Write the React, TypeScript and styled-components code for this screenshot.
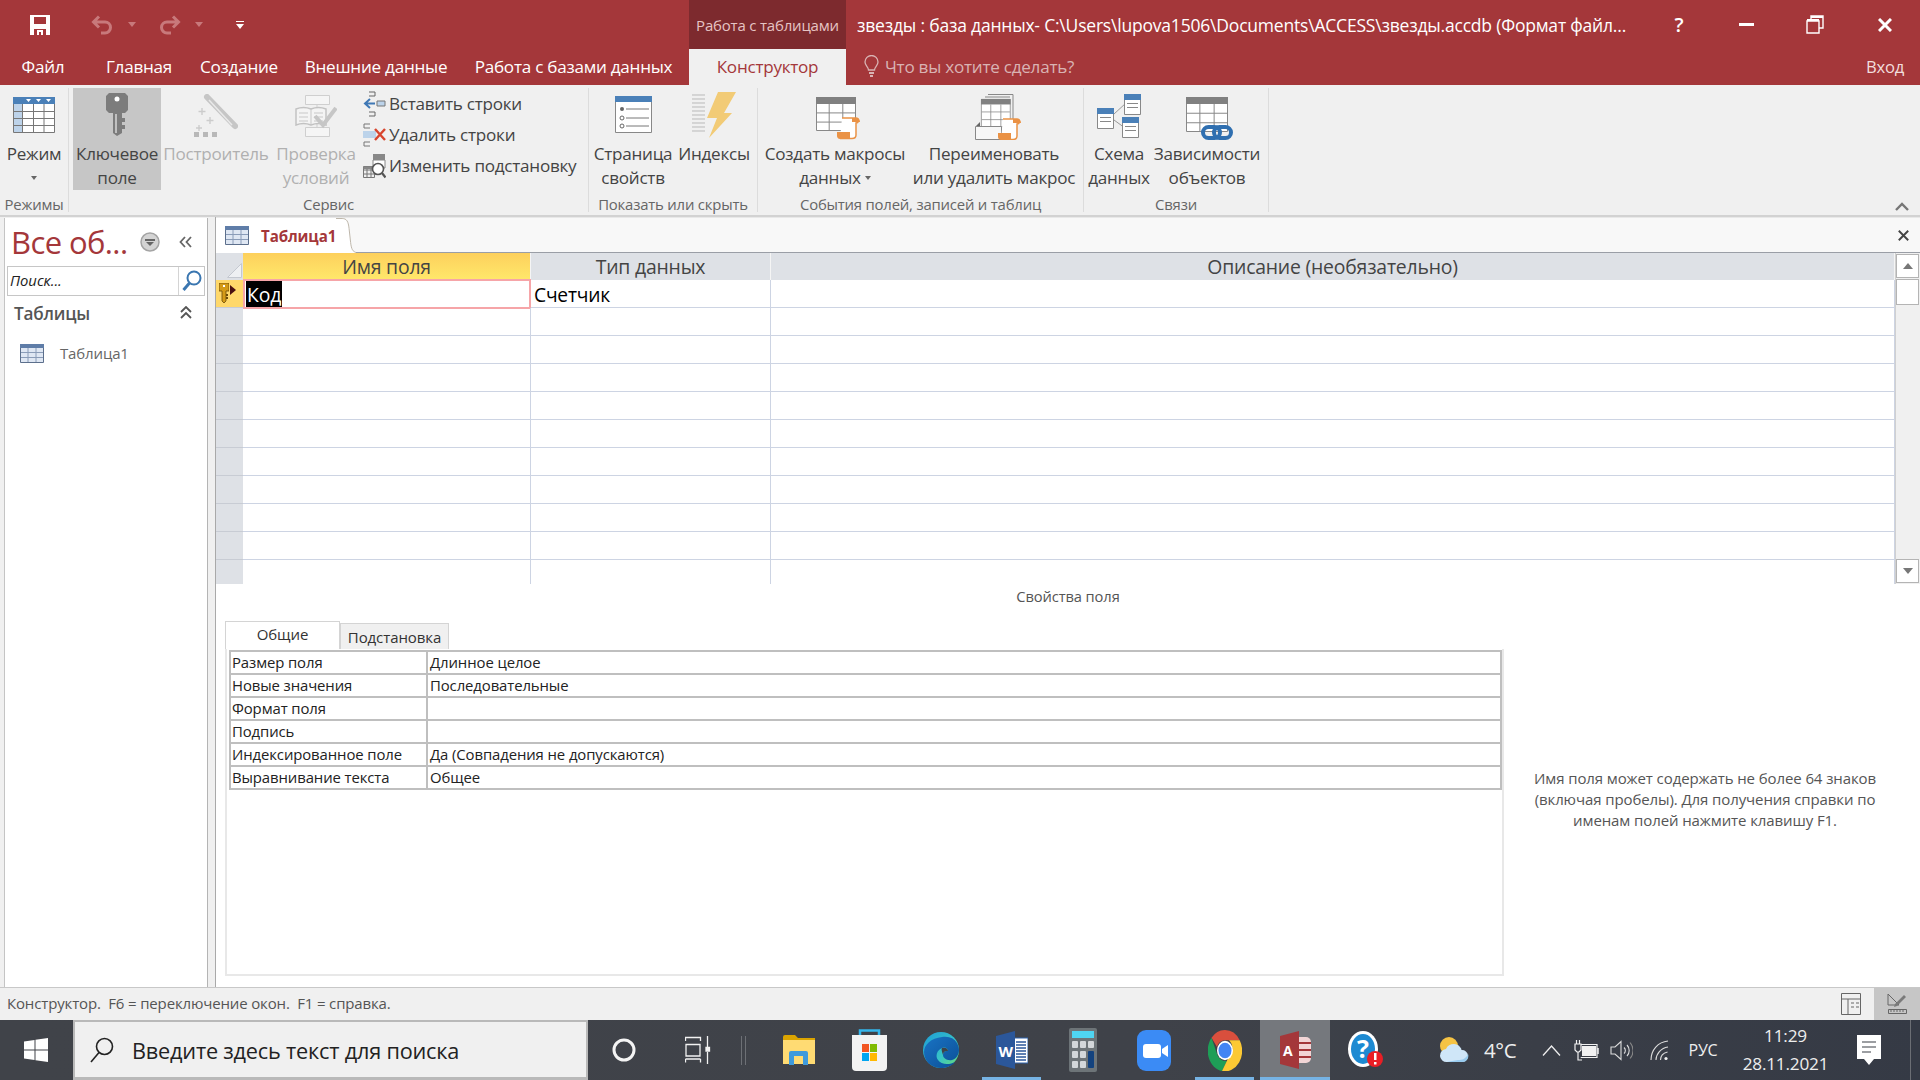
import React from "react";
import styled, { createGlobalStyle } from "styled-components";

const UI = `"Open Sans", "Noto Sans", "Liberation Sans", sans-serif`;
const RED = "#a4373a";

const Global = createGlobalStyle`
  html, body { margin: 0; padding: 0; background: #f0f0f0; }
  * { box-sizing: border-box; }
`;

const Page = styled.div`
  width: 1920px; height: 1080px; overflow: hidden; display: flex; flex-direction: column;
  font-family: ${UI}; background: #f0f0f0; color: #444;
`;
const Ico = styled.svg`display: block; flex: none;`;

/* title bar */
const TitleBar = styled.div`height: 49px; background: ${RED}; display: flex; align-items: center; color: #fff;`;
const Slot = styled.div<{ $w: number; $ml?: number }>`
  width: ${p => p.$w}px; margin-left: ${p => p.$ml ?? 0}px; height: 100%; flex: none;
  display: flex; align-items: center; justify-content: center;
`;
const HelpMark = styled.span`font-size: 20px; font-weight: 600; color: #fff;`;
const ContextLabel = styled.div`
  width: 157px; height: 49px; margin-left: 439px; background: #7d2a2e; color: #e6c4c4;
  font-size: 15px; letter-spacing: -0.2px; display: flex; align-items: center; justify-content: center; white-space: nowrap;
`;
const DocTitle = styled.div`
  margin-left: 11px; width: 790px; font-size: 17.5px; letter-spacing: -0.2px; white-space: nowrap; overflow: hidden; color: #fff;
`;
const TabBar = styled.div`height: 36px; background: ${RED}; display: flex; align-items: stretch;`;
const Tab = styled.div<{ $w: number }>`
  width: ${p => p.$w}px; flex: none; display: flex; align-items: center; justify-content: center;
  color: #fff; font-size: 17.1px; letter-spacing: -0.25px; white-space: nowrap; padding-bottom: 2px;
`;
const ActiveTab = styled(Tab)`margin-left: 8px; background: #f0f0f0; color: ${RED};`;
const TellMe = styled.div`
  margin-left: 18px; display: flex; align-items: center; gap: 6px; color: #d9b3b3;
  font-size: 17.1px; letter-spacing: -0.25px; padding-bottom: 2px;
`;
const SignIn = styled.div`
  margin-left: auto; padding: 0 16px 2px 0; display: flex; align-items: center; color: #f2dede; font-size: 16.6px; letter-spacing: -0.25px;
`;

/* ribbon */
const Ribbon = styled.div`
  height: 132px; background: #f0f0f0; display: flex; padding-top: 3px; border-bottom: 2px solid #d2d2d2; position: relative;
`;
const Group = styled.div<{ $w: number; $pl: number }>`
  width: ${p => p.$w}px; flex: none; height: 124px; border-right: 1px solid #dcdcdc;
  display: flex; flex-direction: column; padding-left: ${p => p.$pl}px;
`;
const GroupBody = styled.div`display: flex; height: 102px;`;
const GroupLabel = styled.div<{ $pl: number }>`
  margin: 5px 0 0 -${p => p.$pl}px; height: 18px; line-height: 18px; text-align: center; font-size: 14.9px; letter-spacing: -0.2px; color: #666; white-space: nowrap;
`;
const Big = styled.div<{ $w: number; $on?: boolean; $off?: boolean; $ml?: number }>`
  width: ${p => p.$w}px; height: 102px; flex: none; margin-left: ${p => p.$ml ?? 0}px;
  background: ${p => (p.$on ? "#c6c6c6" : "transparent")};
  color: ${p => (p.$off ? "#b0b0b0" : "#444")};
  display: flex; flex-direction: column; align-items: center;
  font-size: 17.1px; letter-spacing: -0.25px; line-height: 24px; text-align: center; white-space: nowrap;
`;
const BigIcon = styled.div<{ $top: number; $shift?: number }>`
  height: 54px; width: 100%; padding-top: ${p => p.$top}px; padding-left: ${p => p.$shift ?? 0}px; display: flex; justify-content: center; flex: none;
`;
const Caret = styled.span<{ $flush?: boolean }>`
  display: inline-block; width: 0; height: 0; border-left: 3.5px solid transparent; border-right: 3.5px solid transparent;
  border-top: 4px solid #666; vertical-align: middle; margin-left: ${p => (p.$flush ? 0 : 4)}px;
`;
const CaretLine = styled.div`height: 24px; display: flex; align-items: center; justify-content: center;`;
const SmallCol = styled.div`display: flex; flex-direction: column; margin-left: 4px;`;
const SmallRow = styled.div`
  height: 31px; display: flex; align-items: center; gap: 3px; font-size: 17.1px; letter-spacing: -0.25px; white-space: nowrap; color: #444;
`;
const Collapse = styled.div`position: absolute; right: 11px; bottom: 4px;`;

/* workspace */
const Work = styled.div`flex: 1; min-height: 0; display: flex; background: #f0f0f0; border-bottom: 1px solid #c8c8c8;`;
const Nav = styled.aside`
  width: 204px; margin: 1px 0 0 4px; background: #fff; border-left: 1px solid #c4c4c4; border-right: 1px solid #b4b4b4; flex: none;
  display: flex; flex-direction: column;
`;
const NavHead = styled.div`height: 48px; display: flex; align-items: center; padding-left: 6px; position: relative;`;
const NavTitle = styled.div`
  color: ${RED}; font-size: 31px; letter-spacing: -0.6px; width: 129px; white-space: nowrap; line-height: 48px;
`;
const NavSearch = styled.div`
  margin-left: 2px; width: 198px; height: 30px; border: 1px solid #c6c6c6; display: flex; align-items: center; flex: none;
`;
const SearchText = styled.div`
  flex: 1; font-style: italic; color: #222; font-size: 14.8px; padding-left: 2px; height: 100%; line-height: 26px; border-right: 1px solid #d4d4d4;
`;
const SearchBtn = styled.div`width: 25px; display: flex; justify-content: center;`;
const NavGroup = styled.div`
  height: 34px; display: flex; align-items: center; justify-content: space-between; padding: 0 15px 0 9px;
  font-size: 17.2px; font-weight: 600; color: #555; letter-spacing: -0.2px;
`;
const NavItem = styled.div`
  margin-top: 8px; height: 30px; display: flex; align-items: center; gap: 16px; padding-left: 15px; font-size: 15px; color: #666; letter-spacing: -0.15px;
`;
const Doc = styled.main`
  flex: 1; min-width: 0; margin-left: 7px; background: #fff; border-left: 1px solid #a9a9a9; display: flex; flex-direction: column;
`;
const Strip = styled.div`
  height: 36px; background: #f8f8f8; display: flex; align-items: stretch; border-bottom: 1px solid #9a9ea6; border-top: 1px solid #e8e8e8;
  justify-content: space-between; padding-right: 11px; flex: none;
`;
const DocTab = styled.div`
  width: 121px; margin-bottom: -1px; background: #fff; position: relative; display: flex; align-items: center; gap: 12px; padding-left: 9px;
  font-size: 15.1px; font-weight: 700; color: ${RED}; letter-spacing: -0.1px; white-space: nowrap;
`;
const TabEdge = styled.svg`position: absolute; right: -19px; top: 0;`;
const CloseDoc = styled.div`display: flex; align-items: center;`;
const GridWrap = styled.div`height: 331px; display: flex; overflow: hidden; flex: none;`;
const DesignGrid = styled.div`
  flex: 1; min-width: 0; display: grid; grid-template-columns: 27px 288px 240px 1fr; grid-auto-rows: 28px; grid-template-rows: 27px;
  align-content: start;
`;
const HeadCell = styled.div<{ $active?: boolean }>`
  background: ${p => (p.$active ? "linear-gradient(#fdd05c, #ffe86b)" : "#dee1e6")};
  border-right: 1px solid #f5f5f5; display: flex; align-items: center; justify-content: center;
  font-size: 19.4px; letter-spacing: -0.2px; color: #444; white-space: nowrap;
`;
const Corner = styled.div`background: #dee1e6; position: relative; display: flex; justify-content: flex-end; align-items: flex-end; padding: 0 1px 2px 0;`;
const Selector = styled.div<{ $active?: boolean }>`
  background: ${p => (p.$active ? "#ffd86a" : "#dee1e6")}; border-bottom: 1px solid #c8ccd4; display: flex; align-items: flex-start; padding: 3px 0 0 3px; gap: 1px;
`;
const Cell = styled.div`
  border-right: 1px solid #cdd4e3; border-bottom: 1px solid #cdd4e3; font-size: 19.2px; letter-spacing: -0.2px; color: #000; padding-left: 3px; line-height: 30px; white-space: nowrap;
`;
const CurrentCell = styled.div`
  border: 2px solid #f6a5a8; margin: -1px 0 -1px 0; padding-left: 1px; display: flex; align-items: stretch; font-size: 19.4px; color: #fff;
`;
const Selected = styled.span`background: #000; color: #fff; padding: 0 1px; line-height: 27px; letter-spacing: -0.1px;`;
const Scroll = styled.div`width: 25px; flex: none; background: #f0f0f0; display: flex; flex-direction: column; border-left: 1px solid #d0d0d0; padding: 1px 0;`;
const ScrollBtn = styled.div`height: 24px; background: #fff; border: 1px solid #b4b4b4; display: flex; align-items: center; justify-content: center; margin-right: 1px;`;
const Thumb = styled.div`height: 26px; background: #fff; border: 1px solid #b4b4b4; margin: 1px 1px 0 0;`;
const ScrollGap = styled.div`flex: 1;`;
const Triangle = styled.span<{ $down?: boolean }>`
  width: 0; height: 0; border-left: 5.5px solid transparent; border-right: 5.5px solid transparent;
  ${p => (p.$down ? "border-top: 6px solid #777;" : "border-bottom: 6px solid #777;")}
`;
const Caption = styled.div`margin-top: 2px; height: 20px; line-height: 20px; text-align: center; font-size: 14.7px; letter-spacing: -0.1px; color: #555; flex: none;`;
const PropsArea = styled.div`flex: 1; min-height: 0; margin-top: 15px; padding-left: 9px; display: flex;`;
const PropsLeft = styled.div`width: 1279px; flex: none; display: flex; flex-direction: column;`;
const PropTabs = styled.div`height: 28px; display: flex; align-items: flex-end; flex: none;`;
const PropTab = styled.div<{ $active?: boolean; $w: number }>`
  width: ${p => p.$w}px; height: ${p => (p.$active ? 28 : 26)}px; background: ${p => (p.$active ? "#fff" : "#f0f0f0")};
  border: 1px solid #d4d4d4; border-bottom: none; display: flex; align-items: center; justify-content: center; font-size: 15px; letter-spacing: -0.1px; color: #333;
  ${p => (p.$active ? "padding-bottom: 3px;" : "")}
`;
const PropFrame = styled.div`height: 327px; border: 2px solid #e8e8e8; border-top: none; padding: 1px 0 0 2px; flex: none;`;
const PropTable = styled.div`width: 1273px; border: 2px solid #bfbfbf; border-bottom: none;`;
const PropRow = styled.div`height: 23px; display: grid; grid-template-columns: 197px 1fr; border-bottom: 2px solid #bfbfbf; font-size: 14.9px; letter-spacing: -0.1px; line-height: 21px; color: #222; white-space: nowrap;`;
const PropKey = styled.div`border-right: 2px solid #bfbfbf; padding-left: 1px;`;
const PropVal = styled.div`padding-left: 2px;`;
const Help = styled.div`
  flex: 1; padding: 147px 14px 0 0; text-align: center; font-size: 15px; line-height: 21px; color: #555; letter-spacing: -0.1px; white-space: nowrap;
`;

/* status */
const Status = styled.div`height: 32px; display: flex; align-items: center; background: #f0f0f0; padding-left: 7px; font-size: 15px; color: #555; letter-spacing: -0.15px; white-space: pre; flex: none;`;
const StatusText = styled.div`padding-bottom: 2px;`;
const StatusViews = styled.div`margin-left: auto; display: flex; height: 100%;`;
const ViewBtn = styled.div<{ $on?: boolean; $w: number }>`
  width: ${p => p.$w}px; display: flex; align-items: center; justify-content: center; background: ${p => (p.$on ? "#c6c6c6" : "transparent")};
`;

/* taskbar */
const Taskbar = styled.div`
  height: 60px; background: linear-gradient(90deg, #404349, #3f4249 60%, #353a45); display: flex; align-items: stretch; color: #eee; flex: none;
`;
const StartBtn = styled.div`width: 73px; display: flex; align-items: center; justify-content: center; padding-right: 1px;`;
const SearchBox = styled.div`
  width: 515px; background: #f0f0f0; border: 2px solid #b9b9b9; border-bottom-width: 3px; display: flex; align-items: center; gap: 18px; padding: 1px 0 0 15px;
  font-size: 21.7px; color: #222; letter-spacing: -0.2px; white-space: nowrap; flex: none;
`;
const TaskSlot = styled.div<{ $w: number; $open?: boolean; $active?: boolean; $pl?: number }>`
  width: ${p => p.$w}px; flex: none; position: relative; display: flex; align-items: center; justify-content: center;
  padding-left: ${p => p.$pl ?? 0}px;
  background: ${p => (p.$active ? "#75787d" : "transparent")};
  ${p => (p.$open || p.$active ? `&::after { content: ""; position: absolute; left: ${p.$active ? 0 : 6}px; right: ${p.$active ? 0 : 6}px; bottom: 0; height: 3px; background: #76b3e4; }` : "")}
`;
const Sep = styled.div`width: 28px; flex: none; display: flex; justify-content: flex-start; align-items: center; gap: 3px; padding-left: 6px;`;
const SepLine = styled.div`width: 1px; height: 29px; background: #6d7075;`;
const TrayText = styled.div<{ $w: number }>`
  width: ${p => p.$w}px; flex: none; display: flex; align-items: center; justify-content: center; font-size: 19px; letter-spacing: -0.4px; color: #eee;
`;
const TempText = styled(TrayText)`justify-content: flex-start; font-size: 20.5px; letter-spacing: -0.4px; padding-left: 2px;`;
const LangText = styled(TrayText)`font-size: 16px; letter-spacing: -0.2px;`;
const Clock = styled.div`
  width: 115px; flex: none; display: flex; flex-direction: column; justify-content: center; align-items: center; font-size: 17.2px; line-height: 28px; letter-spacing: -0.2px; color: #eee;
`;
const EndSep = styled.div`width: 1px; height: 100%; margin-left: 17px; background: #6b6e74;`;

/* ---- icons ---- */
const Save = () => (
  <Ico width="20" height="20" viewBox="0 0 20 20">
    <path d="M0 0h20v20H0z" fill="#fff" />
    <path d="M4 2h12v7H4z" fill={RED} />
    <path d="M4 14h12v6H4z" fill={RED} />
    <path d="M7 15h6v5h-2v-3H9v3H7z" fill="#fff" />
  </Ico>
);
const Undo = ({ flip }: { flip?: boolean }) => (
  <Ico width="22" height="20" viewBox="0 0 22 20" style={flip ? { transform: "scaleX(-1)" } : undefined}>
    <path d="M3 7h11a5.5 5.5 0 0 1 0 11h-4M8 1.5 2.5 7 8 12.5" fill="none" stroke="#c8797b" strokeWidth="3" />
  </Ico>
);
const TinyDown = ({ c = "#c8797b" }: { c?: string }) => (
  <Ico width="8" height="5" viewBox="0 0 8 5"><path d="M0 0h8L4 5z" fill={c} /></Ico>
);
const Customize = () => (
  <Ico width="8" height="8" viewBox="0 0 8 8"><path d="M0 0h8v1H0zM0 3h8L4 8z" fill="#fff" /></Ico>
);
const Minimize = () => <Ico width="15" height="3" viewBox="0 0 15 3"><path d="M0 0h15v3H0z" fill="#fff" /></Ico>;
const Restore = () => (
  <Ico width="18" height="19" viewBox="0 0 18 19" fill="none" stroke="#fff" strokeWidth="1.4">
    <path d="M5 4V1h12v12h-4" /><path d="M1 6h12v12H1z" /><path d="M1 5h12M5 2h12" strokeWidth="2.2" />
  </Ico>
);
const CloseX = ({ s = 14, c = "#fff", w = 3 }: { s?: number; c?: string; w?: number }) => (
  <Ico width={s} height={s} viewBox="0 0 14 14"><path d="M1 1l12 12M13 1 1 13" stroke={c} strokeWidth={w} fill="none" /></Ico>
);
const Bulb = () => (
  <Ico width="15" height="22" viewBox="0 0 15 22" fill="none" stroke="#d9b3b3" strokeWidth="1.3">
    <path d="M4.5 15c0-3-3.5-4.5-3.5-8a6.5 6.5 0 0 1 13 0c0 3.5-3.5 5-3.5 8z" />
    <path d="M5 18h5M6 21h3" strokeWidth="1.8" />
  </Ico>
);
const ModeIcon = () => (
  <Ico width="42" height="36" viewBox="0 0 42 36">
    <path d="M.5.5h41v35H.5z" fill="#fff" stroke="#777" />
    <path d="M0 0h42v7H0z" fill="#4a80b8" />
    <path d="M13 2h5l-2.500 3zM23 2h5l-2.500 3zM33 2h5l-2.500 3z" fill="#fff" />
    <path d="M1 7h8v28H1z" fill="#bdd3ea" />
    <path d="M9.500 7v28M20.500 7v28M31 7v28M1 14.500h40M1 21.500h40M1 28.500h40" stroke="#777" fill="none" />
  </Ico>
);
const KeyIcon = () => (
  <Ico width="22" height="43" viewBox="0 0 22 43">
    <path d="M3 0h16l3 3v14l-3 3h-3v20l-5 3-4-3V20H3l-3-3V3z" fill="#7c7c7c" />
    <circle cx="11" cy="6" r="2.500" fill="#fff" />
    <path d="M9 21h2v19H9z" fill="#c0c0c0" />
    <path d="M16 25h3v4h-3zM16 32h3v4h-3z" fill="#7c7c7c" />
  </Ico>
);
const BuilderIcon = () => (
  <Ico width="44" height="44" viewBox="0 0 44 44">
    <path d="M13 3 41 32" stroke="#c6c6c6" strokeWidth="6" strokeLinecap="round" />
    <path d="M15 6 38 31" stroke="#e9e9e9" strokeWidth="1.5" />
    <path d="M8 14v7M4.500 17.500h7M16 23v7M12.500 26.500h7M5 31v6M2 34h6" stroke="#ccc" strokeWidth="1.4" />
    <path d="M0 38h5v5H0zM9 38h5v5H9zM18 38h5v5h-5z" fill="#b8b8b8" />
  </Ico>
);
const ValidateIcon = () => (
  <Ico width="42" height="44" viewBox="0 0 42 44" fill="none">
    <path d="M10.500 1.500h24v9h-24zM10.500 33.500h24v9h-24z" stroke="#cfcfcf" fill="#f5f5f5" />
    <path d="M22 11v22" stroke="#cfcfcf" />
    <path d="M1 15c5-2 10-2 15 0 5-2 10-2 15 0v16c-5-2-10-2-15 0-5-2-10-2-15 0z" fill="#f4f4f4" stroke="#c2c2c2" strokeWidth="1.5" />
    <path d="M16 15v16M4 19h9M4 23h9M4 27h9M19 19h9M19 23h9M19 27h9" stroke="#c8c8c8" />
    <path d="M20 22l8 9L41 14" stroke="#c6c6c6" strokeWidth="4" />
  </Ico>
);
const InsertRows = () => (
  <Ico width="23" height="26" viewBox="0 0 23 26" fill="none">
    <path d="M6 1h6v4H6M6 21h6v4H6" stroke="#666" />
    <path d="M14 10h8v5h-8z" fill="#bcd3ea" stroke="#777" />
    <path d="M12 12.500H3M7 8l-5 4.500L7 17" stroke="#3f78b5" strokeWidth="2" />
  </Ico>
);
const DeleteRows = () => (
  <Ico width="23" height="24" viewBox="0 0 23 24" fill="none">
    <path d="M7 1H1v4h6M7 19H1v4h6" stroke="#777" />
    <path d="M0 8h13v7H0z" fill="#bcd3ea" />
    <path d="M12 6l10 11M22 6 12 17" stroke="#d8452e" strokeWidth="2.400" />
  </Ico>
);
const LookupIcon = () => (
  <Ico width="23" height="26" viewBox="0 0 23 26" fill="none">
    <path d="M10 1h12v6H10z" fill="#888" />
    <path d="M10 7h12v8H10z" stroke="#888" fill="#fff" />
    <path d="M.5 13.500h11v11H.5zM4 14v10M8 14v10M1 17h10M1 21h10" stroke="#777" />
    <path d="M.5 13.500h11V16H.5z" fill="#888" />
    <circle cx="15" cy="16" r="5.500" fill="#fff" stroke="#555" strokeWidth="1.600" />
    <path d="M19 20l3.500 4.500" stroke="#555" strokeWidth="2.200" />
  </Ico>
);
const PropSheet = () => (
  <Ico width="37" height="37" viewBox="0 0 37 37" fill="none">
    <path d="M.5.5h36v36H.5z" fill="#fff" stroke="#888" />
    <path d="M0 0h37v6H0z" fill="#4a80b8" />
    <circle cx="7" cy="13" r="2" fill="#666" />
    <circle cx="7" cy="22" r="2" stroke="#666" />
    <circle cx="7" cy="30" r="2" stroke="#666" />
    <path d="M11 13h23M11 22h23M11 30h23" stroke="#777" />
  </Ico>
);
const Indexes = () => (
  <Ico width="44" height="46" viewBox="0 0 44 46" fill="none">
    <path d="M0 3h13M0 7h13M0 11h13M0 15h13M0 19h13M0 23h13M0 27h13M0 31h13M0 35h13M0 39h13" stroke="#b9b9b9" strokeWidth="1" />
    <path d="M26 0h18L32 21h8L17 46l8-20H15z" fill="#f2cb76" />
  </Ico>
);
const TableGray = ({ w = 40, h = 34 }: { w?: number; h?: number }) => (
  <g>
    <path d={`M.5.5h${w - 1}v${h - 1}H.5z`} fill="#fff" stroke="#888" />
    <path d={`M0 0h${w}v7H0z`} fill="#808080" />
    <path d={`M${w * .33} 7v${h - 7}M${w * .67} 7v${h - 7}M1 ${7 + (h - 7) * .33}h${w - 2}M1 ${7 + (h - 7) * .67}h${w - 2}`} stroke="#888" />
  </g>
);
const Scroll2 = () => (
  <g>
    <path d="M5 1h14c3 0 3 5 0 5v12c0 3-2 3.500-4 3.500H3" fill="#fff" stroke="#ea9245" strokeWidth="1.500" />
    <path d="M0 15h13v7H3c-2 0-3-2-3-3z" fill="#ea9245" />
    <path d="M15 1h5c2 0 3 2 3 4h-8z" fill="#ea9245" />
  </g>
);
const MacroCreate = () => (
  <Ico width="44" height="43" viewBox="0 0 44 43">
    <TableGray />
    <g transform="translate(21 20)"><Scroll2 /></g>
  </Ico>
);
const MacroRename = () => (
  <Ico width="46" height="46" viewBox="0 0 46 46" fill="none">
    <path d="M13 .5h25v30M10 3h25" stroke="#888" />
    <g transform="translate(6 5) scale(.78)"><TableGray w={38} h={36} /></g>
    <path d="M.5 32.500h26v13H.5z" fill="#f7f7f7" stroke="#888" />
    <path d="M1 32l4-4v4z" fill="#666" />
    <g transform="translate(23 24)"><Scroll2 /></g>
  </Ico>
);
const MiniTable = ({ x, y }: { x: number; y: number }) => (
  <g transform={`translate(${x} ${y})`}>
    <path d="M.5.5h16v20H.5z" fill="#fff" stroke="#888" />
    <path d="M0 0h17v6H0z" fill="#4a80b8" />
    <path d="M3 9.500h11M3 13.500h11" stroke="#888" />
  </g>
);
const Schema = () => (
  <Ico width="46" height="44" viewBox="0 0 46 44" fill="none">
    <path d="M17 20l12-11M17 26l11 8" stroke="#999" />
    <MiniTable x={27} y={0} />
    <MiniTable x={0} y={14} />
    <MiniTable x={25} y={23} />
  </Ico>
);
const Depend = () => (
  <Ico width="48" height="43" viewBox="0 0 48 43" fill="none">
    <TableGray w={42} h={35} />
    <rect x="17" y="30" width="17" height="11" rx="5.500" fill="none" stroke="#2f6fb0" strokeWidth="4" />
    <rect x="28" y="30" width="17" height="11" rx="5.500" fill="none" stroke="#2f6fb0" strokeWidth="4" />
  </Ico>
);
const Chevron = ({ c = "#777" }: { c?: string }) => (
  <Ico width="14" height="9" viewBox="0 0 14 9"><path d="M1 8l6-6 6 6" fill="none" stroke={c} strokeWidth="2.400" /></Ico>
);
const NavTableIcon = ({ w = 24, h = 19 }: { w?: number; h?: number }) => (
  <Ico width={w} height={h} viewBox="0 0 24 19">
    <path d="M.5.500h23v18H.5z" fill="#dfe7f3" stroke="#5c6f8c" />
    <path d="M0 0h24v4H0z" fill="#5f7da8" />
    <path d="M8 4v14M16 4v14M1 8.500h22M1 13.500h22" stroke="#8a9cb8" />
  </Ico>
);
const Funnel = () => (
  <Ico width="20" height="20" viewBox="0 0 20 20">
    <circle cx="10" cy="10" r="9" fill="#d4d4d4" stroke="#a4a4a4" strokeWidth="1.500" />
    <path d="M5 7h10v2H5zM6 10h8l-4 4z" fill="#666" />
  </Ico>
);
const DoubleLeft = () => (
  <Ico width="13" height="12" viewBox="0 0 13 12"><path d="M6 1 1.500 6 6 11M12 1 7.500 6 12 11" fill="none" stroke="#666" strokeWidth="1.800" /></Ico>
);
const DoubleUp = () => (
  <Ico width="12" height="14" viewBox="0 0 12 14"><path d="M1 6l5-5 5 5M1 12l5-5 5 5" fill="none" stroke="#555" strokeWidth="1.800" /></Ico>
);
const BlueGlass = () => (
  <Ico width="20" height="22" viewBox="0 0 20 22" fill="none" stroke="#3a76b0">
    <circle cx="12" cy="8" r="6.500" strokeWidth="2" /><path d="M7.500 13 1.500 20" strokeWidth="3" />
  </Ico>
);
const GoldKey = () => (
  <Ico width="10" height="20" viewBox="0 0 10 20">
    <path d="M0 0h10v8H7v10l-2 2-2-2V8H0z" fill="#d49a17" stroke="#6b4a08" strokeWidth=".8" />
    <path d="M4 2h2v2H4z" fill="#fff" /><path d="M7 11h2v2H7zM7 14h2v2H7z" fill="#6b4a08" />
  </Ico>
);
const Pointer = () => <Ico width="6" height="10" viewBox="0 0 6 10" style={{ marginTop: 2 }}><path d="M0 0l6 5-6 5z" fill="#4a1010" /></Ico>;
const CornerTri = () => <Ico width="15" height="15" viewBox="0 0 15 15"><path d="M14.500.5V14.500H.5z" fill="#eef0f3" stroke="#c4c8d0" /></Ico>;
const DatasheetView = () => (
  <Ico width="20" height="22" viewBox="0 0 20 22" fill="none" stroke="#666">
    <path d="M.5.500h19v21H.5zM1 6h18M7 6v15" /><path d="M10 10h3M15 10h3M10 14h3M15 14h3" />
  </Ico>
);
const DesignView = () => (
  <Ico width="20" height="22" viewBox="0 0 20 22" fill="none" stroke="#666">
    <path d="M1 1v11h11zM1.500 16.500h18v4h-18z" />
    <path d="M4 17v2M7 17v2M10 17v2M13 17v2M16 17v2" />
    <path d="M8 11 17 2l2 2-9 9-3 1z" fill="#7a7a7a" stroke="none" />
  </Ico>
);

/* taskbar icons */
const WinLogo = () => (
  <Ico width="24" height="24" viewBox="0 0 24 24"><path d="M0 3.500 10.500 2v9.500H0zM11.500 1.800 24 0v11.500H11.500zM0 12.500h10.500V22L0 20.500zM11.500 12.500H24V24l-12.500-1.800z" fill="#fff" /></Ico>
);
const Glass = () => (
  <Ico width="24" height="26" viewBox="0 0 24 26" fill="none" stroke="#222" strokeWidth="1.600"><circle cx="14.500" cy="9.500" r="8" /><path d="M9 15.500 1 25" /></Ico>
);
const Cortana = () => <Ico width="24" height="24" viewBox="0 0 24 24"><circle cx="12" cy="12" r="10" fill="none" stroke="#f4f4f4" strokeWidth="3" /></Ico>;
const TaskView = () => (
  <Ico width="26" height="28" viewBox="0 0 26 28" fill="none" stroke="#f2f2f2" strokeWidth="1.300">
    <path d="M.5 5V1.500h15V5M.5 23v3.500M15.500 23v3.500M.5 23h15M1 8.500h14v11.500H1z" />
    <path d="M22.500 0v11M22.500 16v12" /><path d="M21 11.500h3.500v3.500H21z" fill="#f2f2f2" />
  </Ico>
);
const Explorer = () => (
  <Ico width="32" height="31" viewBox="0 0 32 31">
    <path d="M0 2a2 2 0 0 1 2-2h10l3 3h17v5H0z" fill="#dba400" />
    <path d="M0 5h32v24H0z" fill="#ffdb73" />
    <path d="M6 30V18a2 2 0 0 1 2-2h15a2 2 0 0 1 2 2v12h-5v-9h-9v9z" fill="#3f9adb" />
    <path d="M11 21h9v7h-9z" fill="#ffdb73" />
  </Ico>
);
const Store = () => (
  <Ico width="35" height="42" viewBox="0 0 35 42">
    <path d="M8 8V1.500h19V8" fill="none" stroke="#35b6ec" strokeWidth="2.500" />
    <path d="M0 6h35v32a4 4 0 0 1-4 4H4a4 4 0 0 1-4-4z" fill="#f3f3f3" />
    <path d="M10 15h7v8h-7z" fill="#f25522" /><path d="M18 15h7v8h-7z" fill="#80bb02" />
    <path d="M10 24h7v8h-7z" fill="#01a5f0" /><path d="M18 24h7v8h-7z" fill="#ffb902" />
  </Ico>
);
const Edge = () => (
  <Ico width="36" height="36" viewBox="0 0 36 36">
    <defs>
      <linearGradient id="edgeA" x1="0" y1="0" x2="1" y2="1"><stop offset="0" stopColor="#1d9cd8" /><stop offset=".6" stopColor="#37c4c6" /><stop offset="1" stopColor="#6fdc6e" /></linearGradient>
      <linearGradient id="edgeB" x1="0" y1="0" x2="1" y2="1"><stop offset="0" stopColor="#1973c4" /><stop offset="1" stopColor="#0c4f96" /></linearGradient>
    </defs>
    <circle cx="18" cy="18" r="18" fill="url(#edgeA)" />
    <path d="M1 20C1 29 8 36 18 36c5 0 11-2 14-6-5 3-14 3-17-2-3-4-1-10 4-12 4-1.500 6 1 6 3-3-.5-5 1-5 4 0 3 4 6 9 5 4-1 7-5 7-10 0-3-1-5-2-7C31 6 26 4 19 5 8 6 1 13 1 20z" fill="url(#edgeB)" />
    <path d="M19 16c4-1 6 1 6 3-3-.5-5 1-5 4-1-3-2-6-1-7z" fill="#3f4249" />
  </Ico>
);
const Word = () => (
  <Ico width="32" height="38" viewBox="0 0 32 38">
    <path d="M18 7h14v25H18z" fill="#fff" stroke="#2f62ad" strokeWidth="1" />
    <path d="M20 11h10M20 14h10M20 17h10M20 20h10M20 23h10M20 26h10M20 29h10" stroke="#2b579a" strokeWidth="1.400" />
    <path d="M0 5 19 0v38L0 33z" fill="#2b579a" />
    <text x="2.500" y="26" fontFamily={UI} fontSize="15" fontWeight="700" fill="#fff">W</text>
  </Ico>
);
const Calc = () => (
  <Ico width="28" height="44" viewBox="0 0 28 44">
    <rect width="28" height="44" rx="2" fill="#6d7478" />
    <path d="M3 3h22v7H3z" fill="#4fd5f2" />
    <g fill="#d3d7da">
      <rect x="3" y="13" width="6" height="7" rx="1" /><rect x="11" y="13" width="6" height="7" rx="1" /><rect x="19" y="13" width="6" height="7" rx="1" />
      <rect x="3" y="23" width="6" height="7" rx="1" /><rect x="11" y="23" width="6" height="7" rx="1" />
      <rect x="3" y="33" width="6" height="7" rx="1" /><rect x="11" y="33" width="6" height="7" rx="1" />
    </g>
    <rect x="19" y="23" width="6" height="17" rx="1" fill="#13427e" />
  </Ico>
);
const Zoom = () => (
  <Ico width="34" height="41" viewBox="0 0 34 41">
    <rect width="34" height="41" rx="9" fill="#3b8bf5" />
    <rect x="6" y="14" width="18" height="14" rx="3" fill="#fff" />
    <path d="M25 19l6-4v12l-6-4z" fill="#fff" />
  </Ico>
);
const Chrome = () => (
  <Ico width="34" height="41" viewBox="0 0 34 34" preserveAspectRatio="none">
    <path d="M17 0a17 17 0 0 1 14.700 8.500H17a8.500 8.500 0 0 0-8 5.500L3.500 6.500A17 17 0 0 1 17 0z" fill="#d94f3d" />
    <path d="M3.500 6.500 9.500 21A8.500 8.500 0 0 0 19 25.500L14 34A17 17 0 0 1 3.500 6.500z" fill="#1e9e57" />
    <path d="M31.700 8.500A17 17 0 0 1 14 34l7-12a8.500 8.500 0 0 0 0-13.500z" fill="#fcc934" />
    <circle cx="17" cy="17" r="8" fill="#fff" /><circle cx="17" cy="17" r="6.500" fill="#4385f4" />
  </Ico>
);
const Access = () => (
  <Ico width="31" height="38" viewBox="0 0 31 38">
    <rect x="14" y="6" width="17" height="26" rx="5" fill="#f2d5d6" />
    <path d="M14 12h17M14 19h17M14 26h17" stroke="#a4373a" strokeWidth="2" />
    <path d="M0 5 19 0v38L0 33z" fill="#a4373a" />
    <text x="3" y="25" fontFamily={UI} fontSize="14" fontWeight="700" fill="#fff">A</text>
  </Ico>
);
const HelpIcon = () => (
  <Ico width="36" height="40" viewBox="0 0 36 40">
    <ellipse cx="16" cy="19" rx="15" ry="18" fill="#fff" />
    <ellipse cx="16" cy="19" rx="12" ry="15" fill="#1d8ad2" />
    <text x="16" y="28" textAnchor="middle" fontFamily={UI} fontSize="25" fontWeight="700" fill="#fff">?</text>
    <circle cx="28" cy="29" r="8" fill="#e91e25" />
    <path d="M27 23h2.500v7H27zM27 32h2.500v2.500H27z" fill="#fff" />
  </Ico>
);
const Weather = () => (
  <Ico width="32" height="26" viewBox="0 0 32 26">
    <circle cx="11" cy="9" r="9" fill="#f5c344" />
    <path d="M9 25a6.500 6.500 0 0 1-1-13c2-5 10-7 14-2 1 1 1.500 2 1.500 3a6 6 0 0 1 1 12z" fill="#cfe6f8" />
    <path d="M9 25h16a6 6 0 0 0 5-8c-2 5-6 6-10 6-4 1-8 1-11 2z" fill="#98cbee" />
  </Ico>
);
const Caret2 = () => <Ico width="19" height="11" viewBox="0 0 19 11"><path d="M1 10.500l8.500-9.500 8.500 9.500" fill="none" stroke="#eee" strokeWidth="1.300" /></Ico>;
const Battery = () => (
  <Ico width="25" height="22" viewBox="0 0 25 22" fill="none">
    <path d="M6 5.500h17v13H6" stroke="#f1f1f1" strokeWidth="1.200" /><path d="M8 7h14v10H8z" fill="#f1f1f1" /><path d="M24 9v6" stroke="#f1f1f1" strokeWidth="1.500" />
    <path d="M1 5h6v6l-2 2H3l-2-2zM2.500 1v4M5.500 1v4M4 13v8h4" stroke="#f1f1f1" fill="#3a3e47" strokeWidth="1.200" />
  </Ico>
);
const Volume = () => (
  <Ico width="23" height="21" viewBox="0 0 23 21" fill="none" stroke="#ddd" strokeWidth="1.100">
    <path d="M1 7h4l6-5.500v18L5 14H1z" /><path d="M14 7.500a4 4 0 0 1 0 6M17 5a8 8 0 0 1 0 11" /><path d="M20 2.500a12 12 0 0 1 0 16" stroke="#888" />
  </Ico>
);
const Wifi = () => (
  <Ico width="19" height="21" viewBox="0 0 19 21" fill="none" stroke="#ddd" strokeWidth="1.100">
    <path d="M1 20C1 10 8 2 18 1M6 20c0-6 5-12 12-13" /><path d="M10.500 20c0-4 3-7 7-8" />
    <circle cx="16" cy="18.500" r="1.600" fill="#f2f2f2" stroke="none" />
  </Ico>
);
const Bubble = () => (
  <Ico width="24" height="30" viewBox="0 0 24 30">
    <path d="M0 0h24v24h-7l-5 6-5-6H0z" fill="#fff" /><path d="M5 7h14M5 12h14M5 17h9" stroke="#3a3e47" strokeWidth="1.200" />
  </Ico>
);

const rows = Array.from({ length: 10 });
const props: [string, string][] = [
  ["Размер поля", "Длинное целое"],
  ["Новые значения", "Последовательные"],
  ["Формат поля", ""],
  ["Подпись", ""],
  ["Индексированное поле", "Да (Совпадения не допускаются)"],
  ["Выравнивание текста", "Общее"],
];

export default function App() {
  return (
    <Page>
      <Global />
      <TitleBar>
        <Slot $w={80}><Save /></Slot>
        <Slot $w={44}><Undo /></Slot>
        <Slot $w={16}><TinyDown /></Slot>
        <Slot $w={40} $ml={10}><Undo flip /></Slot>
        <Slot $w={18}><TinyDown /></Slot>
        <Slot $w={20} $ml={22}><Customize /></Slot>
        <ContextLabel>Работа с таблицами</ContextLabel>
        <DocTitle>звезды : база данных- C:\Users\lupova1506\Documents\ACCESS\звезды.accdb (Формат файл...</DocTitle>
        <Slot $w={30} $ml={17}><HelpMark>?</HelpMark></Slot>
        <Slot $w={20} $ml={42}><Minimize /></Slot>
        <Slot $w={20} $ml={49}><Restore /></Slot>
        <Slot $w={20} $ml={50}><CloseX /></Slot>
      </TitleBar>
      <TabBar>
        <Tab $w={86}>Файл</Tab>
        <Tab $w={106}>Главная</Tab>
        <Tab $w={94}>Создание</Tab>
        <Tab $w={180}>Внешние данные</Tab>
        <Tab $w={215}>Работа с базами данных</Tab>
        <ActiveTab $w={157}>Конструктор</ActiveTab>
        <TellMe><Bulb />Что вы хотите сделать?</TellMe>
        <SignIn>Вход</SignIn>
      </TabBar>
      <Ribbon>
        <Group $w={69} $pl={5}>
          <GroupBody>
            <Big $w={58}>
              <BigIcon $top={9}><ModeIcon /></BigIcon>
              <div>Режим</div>
              <CaretLine><Caret $flush /></CaretLine>
            </Big>
          </GroupBody>
          <GroupLabel $pl={5}>Режимы</GroupLabel>
        </Group>
        <Group $w={520} $pl={4}>
          <GroupBody>
            <Big $w={88} $on><BigIcon $top={5}><KeyIcon /></BigIcon>Ключевое<br />поле</Big>
            <Big $w={106} $off $ml={2}><BigIcon $top={6}><BuilderIcon /></BigIcon>Построитель</Big>
            <Big $w={86} $off $ml={4}><BigIcon $top={6}><ValidateIcon /></BigIcon>Проверка<br />условий</Big>
            <SmallCol>
              <SmallRow><InsertRows />Вставить строки</SmallRow>
              <SmallRow><DeleteRows />Удалить строки</SmallRow>
              <SmallRow><LookupIcon />Изменить подстановку</SmallRow>
            </SmallCol>
          </GroupBody>
          <GroupLabel $pl={4}>Сервис</GroupLabel>
        </Group>
        <Group $w={169} $pl={3}>
          <GroupBody>
            <Big $w={82}><BigIcon $top={8}><PropSheet /></BigIcon>Страница<br />свойств</Big>
            <Big $w={80}><BigIcon $top={4}><Indexes /></BigIcon>Индексы</Big>
          </GroupBody>
          <GroupLabel $pl={3}>Показать или скрыть</GroupLabel>
        </Group>
        <Group $w={326} $pl={4}>
          <GroupBody>
            <Big $w={146}>
              <BigIcon $top={9} $shift={5}><MacroCreate /></BigIcon>
              Создать макросы
              <CaretLine>данных<Caret /></CaretLine>
            </Big>
            <Big $w={172}><BigIcon $top={6} $shift={7}><MacroRename /></BigIcon>Переименовать<br />или удалить макрос</Big>
          </GroupBody>
          <GroupLabel $pl={4}>События полей, записей и таблиц</GroupLabel>
        </Group>
        <Group $w={185} $pl={4}>
          <GroupBody>
            <Big $w={62}><BigIcon $top={6} $shift={2}><Schema /></BigIcon>Схема<br />данных</Big>
            <Big $w={114}><BigIcon $top={9} $shift={6}><Depend /></BigIcon>Зависимости<br />объектов</Big>
          </GroupBody>
          <GroupLabel $pl={4}>Связи</GroupLabel>
        </Group>
        <Collapse><Chevron /></Collapse>
      </Ribbon>
      <Work>
        <Nav>
          <NavHead>
            <NavTitle>Все об...</NavTitle>
            <Funnel />
            <Slot $w={14} $ml={18}><DoubleLeft /></Slot>
          </NavHead>
          <NavSearch>
            <SearchText>Поиск...</SearchText>
            <SearchBtn><BlueGlass /></SearchBtn>
          </NavSearch>
          <NavGroup>Таблицы<DoubleUp /></NavGroup>
          <NavItem><NavTableIcon />Таблица1</NavItem>
        </Nav>
        <Doc>
          <Strip>
            <DocTab>
              <NavTableIcon />Таблица1
              <TabEdge width="20" height="35" viewBox="0 0 26 35" preserveAspectRatio="none">
                <path d="M0 0h8c6 0 8 3 9 10l2 14c1 7 3 9 7 10v1H0z" fill="#fff" />
                <path d="M0 .5h8c6 0 8 3 9 10l2 14c1 7 3 9 7 10" fill="none" stroke="#b5ada0" />
              </TabEdge>
            </DocTab>
            <CloseDoc><CloseX s={11} c="#444" w={2.4} /></CloseDoc>
          </Strip>
          <GridWrap>
            <DesignGrid>
              <Corner><CornerTri /></Corner>
              <HeadCell $active>Имя поля</HeadCell>
              <HeadCell>Тип данных</HeadCell>
              <HeadCell>Описание (необязательно)</HeadCell>
              <Selector $active><GoldKey /><Pointer /></Selector>
              <CurrentCell><Selected>Код</Selected></CurrentCell>
              <Cell>Счетчик</Cell>
              <Cell />
              {rows.map((_, i) => (
                <React.Fragment key={i}>
                  <Selector /><Cell /><Cell /><Cell />
                </React.Fragment>
              ))}
            </DesignGrid>
            <Scroll>
              <ScrollBtn><Triangle /></ScrollBtn>
              <Thumb />
              <ScrollGap />
              <ScrollBtn><Triangle $down /></ScrollBtn>
            </Scroll>
          </GridWrap>
          <Caption>Свойства поля</Caption>
          <PropsArea>
            <PropsLeft>
              <PropTabs>
                <PropTab $active $w={115}>Общие</PropTab>
                <PropTab $w={109}>Подстановка</PropTab>
              </PropTabs>
              <PropFrame>
                <PropTable>
                  {props.map(([k, v]) => (
                    <PropRow key={k}><PropKey>{k}</PropKey><PropVal>{v}</PropVal></PropRow>
                  ))}
                </PropTable>
              </PropFrame>
            </PropsLeft>
            <Help>
              Имя поля может содержать не более 64 знаков<br />
              (включая пробелы). Для получения справки по<br />
              именам полей нажмите клавишу F1.
            </Help>
          </PropsArea>
        </Doc>
      </Work>
      <Status>
        <StatusText>Конструктор.  F6 = переключение окон.  F1 = справка.</StatusText>
        <StatusViews>
          <ViewBtn $w={46}><DatasheetView /></ViewBtn>
          <ViewBtn $w={46} $on><DesignView /></ViewBtn>
        </StatusViews>
      </Status>
      <Taskbar>
        <StartBtn><WinLogo /></StartBtn>
        <SearchBox><Glass />Введите здесь текст для поиска</SearchBox>
        <TaskSlot $w={72}><Cortana /></TaskSlot>
        <TaskSlot $w={75}><TaskView /></TaskSlot>
        <Sep><SepLine /><SepLine /></Sep>
        <TaskSlot $w={71}><Explorer /></TaskSlot>
        <TaskSlot $w={71}><Store /></TaskSlot>
        <TaskSlot $w={71}><Edge /></TaskSlot>
        <TaskSlot $w={71} $open><Word /></TaskSlot>
        <TaskSlot $w={71}><Calc /></TaskSlot>
        <TaskSlot $w={71}><Zoom /></TaskSlot>
        <TaskSlot $w={71} $open><Chrome /></TaskSlot>
        <TaskSlot $w={70} $active><Access /></TaskSlot>
        <TaskSlot $w={70}><HelpIcon /></TaskSlot>
        <TaskSlot $w={82} $pl={26}><Weather /></TaskSlot>
        <TempText $w={46}>4°C</TempText>
        <TaskSlot $w={43} $pl={4}><Caret2 /></TaskSlot>
        <TaskSlot $w={31}><Battery /></TaskSlot>
        <TaskSlot $w={38}><Volume /></TaskSlot>
        <TaskSlot $w={38}><Wifi /></TaskSlot>
        <LangText $w={50}>РУС</LangText>
        <Clock><div>11:29</div><div>28.11.2021</div></Clock>
        <TaskSlot $w={50} $pl={2}><Bubble /></TaskSlot>
        <EndSep />
      </Taskbar>
    </Page>
  );
}
